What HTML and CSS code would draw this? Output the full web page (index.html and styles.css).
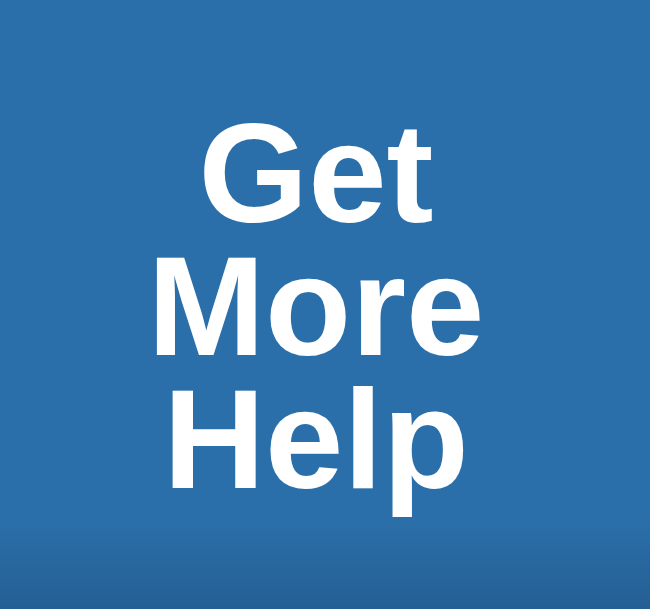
FILE: index.html
```html
<!DOCTYPE html>
<html lang="en">
<head>
    <meta charset="UTF-8">
    <meta name="viewport" content="width=device-width, initial-scale=1.0">
    <title>Get More Help</title>
    <link rel="stylesheet" href="styles.css">
</head>
<body>

<div class="banner">
    <h1 class="banner-title">
        <span class="banner-line">Get</span>
        <span class="banner-line">More</span>
        <span class="banner-line">Help</span>
    </h1>
</div>

</body>
</html>
```

FILE: styles.css
```css
html, body {
    margin: 0;
    padding: 0;
}
body {
    font-family: "Liberation Sans", Arial, sans-serif;
    background-color: #2b6faa;
}
.banner {
    height: 609px;
    display: flex;
    flex-direction: column;
    justify-content: center;
    align-items: center;
    padding: 4px 18px 0 0;
    box-sizing: border-box;
    background: linear-gradient(to bottom, #2b6faa 0%, #2b6faa 85%, #245f93 100%);
}
.banner-title {
    margin: 0;
    display: flex;
    flex-direction: column;
    align-items: center;
    color: #fff;
    font-size: 141px;
    font-weight: bold;
    line-height: 133px;
}
.banner-line {
    display: block;
    height: 133px;
}
```
